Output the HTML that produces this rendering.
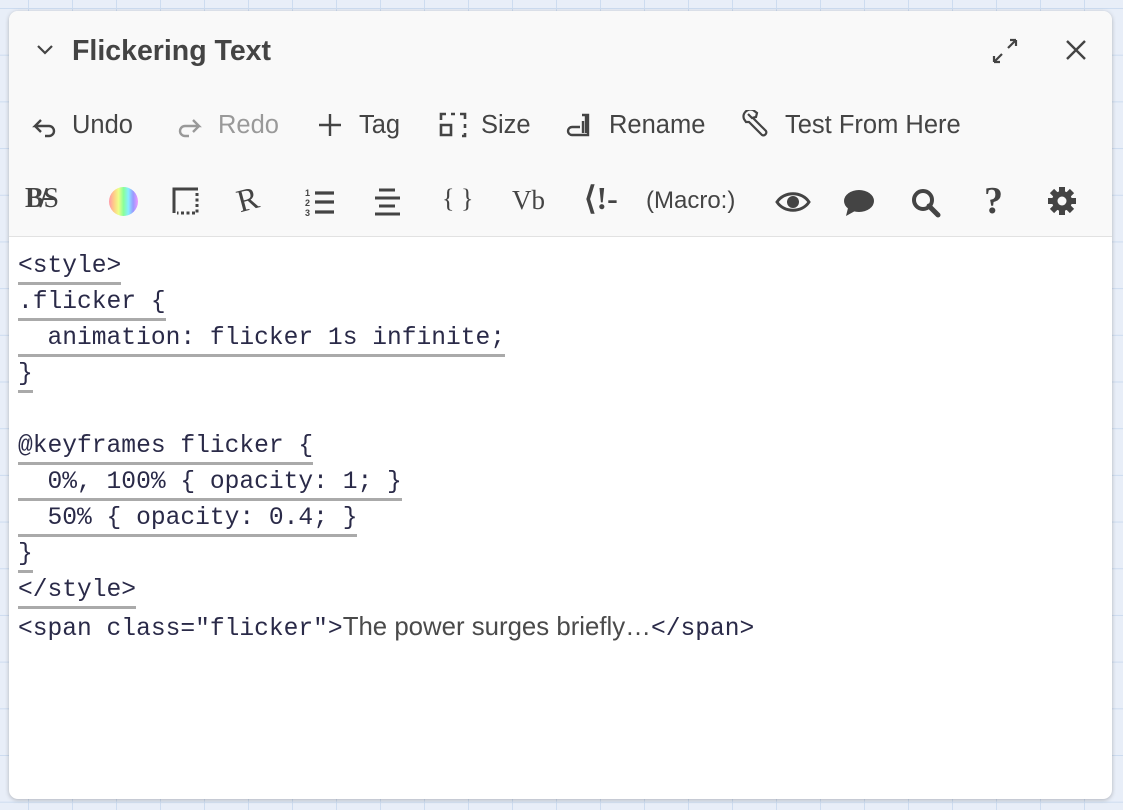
<!DOCTYPE html>
<html><head><meta charset="utf-8"><style>
html,body{margin:0;padding:0;}
body{width:1123px;height:810px;overflow:hidden;position:relative;background-color:#e8eef8;
background-image:linear-gradient(to right,#cddcf0 1px,transparent 1px),linear-gradient(to bottom,#cddcf0 1px,transparent 1px);
background-size:44px 46.7px;background-position:28px 8px;font-family:"Liberation Sans",sans-serif;}
.panel{position:absolute;left:9px;top:11px;width:1103px;height:788px;background:#fff;border-radius:9px;box-shadow:0 1px 4px rgba(0,0,0,.25);overflow:hidden;}
.head{position:absolute;left:0;top:0;width:100%;height:225px;background:#f9f9f9;border-bottom:1px solid #e2e2e2;}
.t{position:absolute;color:#444;white-space:nowrap;}
.title{left:63px;top:24px;font-size:28.5px;font-weight:bold;color:#444;}
.r1{top:99px;font-size:25.5px;line-height:30px;}
svg{position:absolute;}
.code{position:absolute;left:9px;top:240px;font-family:"Liberation Mono",monospace;font-size:24.6px;color:#2a2a48;}
.ln{height:36px;line-height:32px;white-space:pre;}
.ln span.u{border-bottom:3px solid #aaa;display:inline-block;line-height:31px;}
.sans{font-family:"Liberation Sans",sans-serif;color:#4a4a4a;font-size:25.8px;}
</style></head><body>
<div class="panel">
<div class="head">
<svg style="left:26px;top:32px" width="20" height="14" viewBox="0 0 20 14"><path d="M3 3l7 7 7-7" fill="none" stroke="#444" stroke-width="2.2"/></svg>
<div class="t title">Flickering Text</div>
<svg style="left:981px;top:25px" width="30" height="30" viewBox="0 0 30 30"><path d="M4 26l8-8M4 26h6M4 26v-6M26 4l-8 8M26 4h-6M26 4v6" fill="none" stroke="#444" stroke-width="2.2"/></svg>
<svg style="left:1055px;top:27px" width="24" height="24" viewBox="0 0 24 24"><path d="M3 3l18 18M21 3L3 21" stroke="#444" stroke-width="2.4"/></svg>

<svg style="left:22px;top:102px" width="28" height="28" viewBox="0 0 28 28"><path d="M10 7l-6 6h14a5 5 0 0 1 0 10h-4M4 13l6 6" fill="none" stroke="#444" stroke-width="2.4"/></svg>
<div class="t r1" style="left:63px">Undo</div>
<svg style="left:166px;top:102px" width="28" height="28" viewBox="0 0 28 28"><path d="M18 7l6 6H10a5 5 0 0 0 0 10h4M24 13l-6 6" fill="none" stroke="#999" stroke-width="2.4"/></svg>
<div class="t r1" style="left:209px;color:#999">Redo</div>
<svg style="left:308px;top:101px" width="26" height="26" viewBox="0 0 26 26"><path d="M13 2v22M2 13h22" stroke="#444" stroke-width="2.4"/></svg>
<div class="t r1" style="left:350px">Tag</div>
<svg style="left:430px;top:100px" width="28" height="28" viewBox="0 0 28 28"><path d="M2 14v10h10V14z M2 9V3h5M12 3h4M21 3h5v5M26 13v4M26 22v3h-3" fill="none" stroke="#444" stroke-width="2.6"/></svg>
<div class="t r1" style="left:472px">Size</div>
<svg style="left:557px;top:100px" width="28" height="28" viewBox="0 0 28 28"><path d="M16 4h6v20H6a4 4 0 0 1 0-8h8M17 10v12M20 4v18" fill="none" stroke="#444" stroke-width="2.4"/></svg>
<div class="t r1" style="left:600px">Rename</div>
<svg style="left:733px;top:99px" width="32" height="32" viewBox="0 0 32 32"><path d="M6 4l4 4 4-1 1-4-4-3a7 7 0 0 0-9 9l2 3 3 0 13 13a3 3 0 0 0 4-4L11 8" fill="none" stroke="#444" stroke-width="2.2"/></svg>
<div class="t r1" style="left:776px">Test From Here</div>

<div class="t" style="left:16px;top:172px;font-family:'Liberation Serif',serif;font-weight:bold;font-size:28px;letter-spacing:-4px">B/<span style="text-decoration:line-through;font-weight:normal">S</span></div>
<div style="position:absolute;left:100px;top:176px;width:29px;height:29px;border-radius:50%;background:linear-gradient(to right,#f9a,#fc8,#ef8,#8f9,#8ef,#99f,#e9f)"></div>
<svg style="left:162px;top:175px" width="30" height="30" viewBox="0 0 30 30"><path d="M3 27V3h24" fill="none" stroke="#444" stroke-width="3"/><path d="M26 7v20H6" fill="none" stroke="#444" stroke-width="3" stroke-dasharray="3 2.5"/></svg>
<div class="t" style="left:228px;top:170px;font-family:'Liberation Serif',serif;font-size:32px;transform:rotate(-15deg)">R</div>
<svg style="left:296px;top:176px" width="34" height="30" viewBox="0 0 34 30"><text x="0" y="9" font-size="9" font-weight="bold" fill="#444" font-family="Liberation Sans">1</text><text x="0" y="19" font-size="9" font-weight="bold" fill="#444" font-family="Liberation Sans">2</text><text x="0" y="29" font-size="9" font-weight="bold" fill="#444" font-family="Liberation Sans">3</text><path d="M10 6h19M10 15h19M10 25h19" stroke="#444" stroke-width="3.2"/></svg>
<svg style="left:364px;top:176px" width="30" height="30" viewBox="0 0 30 30"><path d="M6 3h16M2 11h25M6 19h16M2 27h25" stroke="#444" stroke-width="3"/></svg>
<div class="t" style="left:433px;top:173px;font-family:'Liberation Serif',serif;font-size:26px">{ }</div>
<div class="t" style="left:503px;top:174px;font-family:'Liberation Serif',serif;font-size:27px">Vb</div>
<div class="t" style="left:575px;top:168px;font-family:'Liberation Serif',serif;font-size:32px;font-weight:bold">⟨!-</div>
<div class="t" style="left:637px;top:176px;font-size:24px">(Macro:)</div>
<svg style="left:766px;top:178px" width="36" height="26" viewBox="0 0 36 26"><path d="M2 13C9 2 27 2 34 13 27 24 9 24 2 13z" fill="none" stroke="#444" stroke-width="3"/><circle cx="18" cy="13" r="6" fill="#444"/></svg>
<svg style="left:833px;top:177px" width="34" height="32" viewBox="0 0 34 32"><ellipse cx="17" cy="13" rx="15" ry="11" fill="#444"/><path d="M6 20l-2 8 9-5z" fill="#444"/></svg>
<svg style="left:900px;top:175px" width="34" height="34" viewBox="0 0 34 34"><circle cx="14" cy="14" r="9" fill="none" stroke="#444" stroke-width="4"/><path d="M20 20l9 9" stroke="#444" stroke-width="5" stroke-linecap="round"/></svg>
<div class="t" style="left:975px;top:168px;font-family:'Liberation Serif',serif;font-size:38px;font-weight:bold">?</div>
<svg style="left:1037px;top:174px" width="32" height="32" viewBox="0 0 32 32"><g fill="#444"><circle cx="16" cy="16" r="10"/><g stroke="#444" stroke-width="6"><path d="M16 2v28M2 16h28M6 6l20 20M26 6L6 26"/></g></g><circle cx="16" cy="16" r="4.5" fill="#f9f9f9"/></svg>
</div>
<div class="code">
<div class="ln"><span class="u">&lt;style&gt;</span></div>
<div class="ln"><span class="u">.flicker {</span></div>
<div class="ln"><span class="u">  animation: flicker 1s infinite;</span></div>
<div class="ln"><span class="u">}</span></div>
<div class="ln"> </div>
<div class="ln"><span class="u">@keyframes flicker {</span></div>
<div class="ln"><span class="u">  0%, 100% { opacity: 1; }</span></div>
<div class="ln"><span class="u">  50% { opacity: 0.4; }</span></div>
<div class="ln"><span class="u">}</span></div>
<div class="ln"><span class="u">&lt;/style&gt;</span></div>
<div class="ln">&lt;span class="flicker"&gt;<span class="sans">The power surges briefly…</span>&lt;/span&gt;</div>
</div>
</div>
</body></html>
